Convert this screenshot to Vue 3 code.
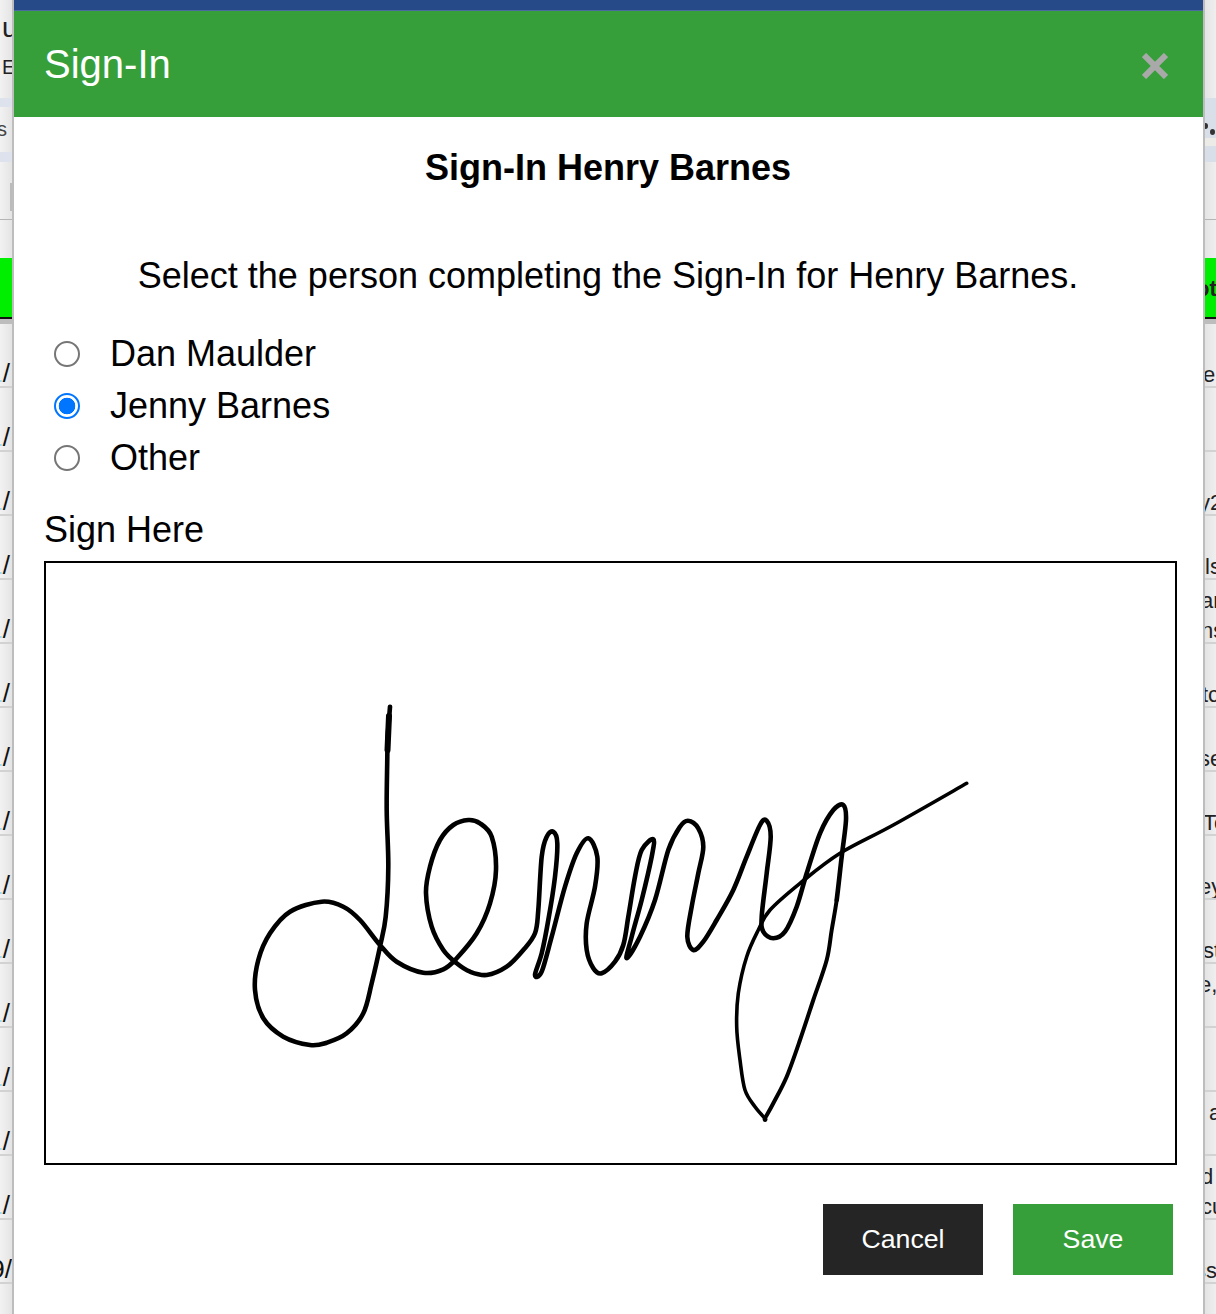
<script setup>
const fromCropA = ([x, y]) => [240 + x / 3, 690 + y / 3]
const fromCropB = ([x, y]) => [600 + x / 3, 760 + y / 3]

const stem = [[450,50],[446,100],[443,140],[442,200],[440,360],[445,530],[437,680],[420,770],[395,880],[370,970],[320,1030],[260,1058],[210,1065],[130,1040],[70,985],[45,900],[55,810],[90,730],[150,665],[245,635],[310,650],[360,690],[420,765],[470,815],[550,848],[610,838],[650,805],[710,730],[750,640],[768,540],[755,440],[720,400],[685,390],[640,405],[600,450],[570,530],[558,610],[575,710],[610,780],[650,820],[690,845],[740,855],[800,830],[850,780],[885,730],[895,660],[905,500],[920,440],[940,425],[952,460],[945,560],[925,690],[905,790],[885,855],[905,845],[935,740],[975,590],[1010,490],[1045,445],[1072,500],[1065,590],[1040,700],[1040,780],[1060,835],[1085,850]].map(fromCropA)
const rest = [[45,605],[70,555],[85,470],[105,350],[125,270],[160,238],[155,290],[125,420],[95,530],[80,595],[120,530],[165,420],[205,270],[240,200],[265,182],[295,205],[310,260],[295,340],[275,440],[262,530],[280,570],[310,545],[350,480],[400,390],[440,290],[480,195],[500,182],[512,230],[500,340],[485,470],[490,515],[520,535],[555,515],[590,440],[620,340],[660,220],[700,150],[730,135],[738,180],[725,290]].map(fromCropB)
const fade = [[710,420],[695,510],[680,600],[640,720],[600,840],[560,950],[520,1030],[495,1075]].map(fromCropB)
const tail = [[495,1075],[465,1040],[435,990],[420,900],[410,800],[415,700],[440,590],[475,510],[510,450],[600,370],[720,280],[880,195],[1100,70]].map(fromCropB)

const all = [...stem, ...rest, ...fade, ...tail]
const fadeStart = stem.length + rest.length
const tailStart = fadeStart + fade.length

function smooth(points, from, to) {
  let d = `M${points[from][0].toFixed(1)} ${points[from][1].toFixed(1)}`
  for (let i = from; i < to; i++) {
    const p0 = points[i - 1] || points[i]
    const p1 = points[i]
    const p2 = points[i + 1]
    const p3 = points[i + 2] || p2
    const c1x = p1[0] + (p2[0] - p0[0]) / 6
    const c1y = p1[1] + (p2[1] - p0[1]) / 6
    const c2x = p2[0] - (p3[0] - p1[0]) / 6
    const c2y = p2[1] - (p3[1] - p1[1]) / 6
    d += `C${c1x.toFixed(1)} ${c1y.toFixed(1)} ${c2x.toFixed(1)} ${c2y.toFixed(1)} ${p2[0].toFixed(1)} ${p2[1].toFixed(1)}`
  }
  return d
}
const mainPath = smooth(all, 0, fadeStart)
const fadePath = smooth(all, fadeStart, tailStart)
const tailPath = smooth(all, tailStart, all.length - 1)

const people = ['Dan Maulder', 'Jenny Barnes', 'Other']
const leftRows = Array.from({ length: 14 }, () => ({ digit: '1', faint: true, pad: 2 }))
  .concat({ digit: '9', faint: false, pad: 0 })
const rightRows = [
  { a: '', b: 'e', x: -2 },
  { a: '', b: '', x: 0 },
  { a: '', b: 'y2', x: -6 },
  { a: '', b: 'ls', x: 0 },
  { a: 'ar', b: 'ns', x: -4 },
  { a: '', b: 'tc', x: -3 },
  { a: '', b: 'se', x: -6 },
  { a: '', b: 'Te', x: -2 },
  { a: '', b: 'ey', x: -6 },
  { a: '', b: 'st', x: -2 },
  { a: 'e,', b: '', x: -6 },
  { a: '', b: '', x: 0 },
  { a: 'a', b: '', x: 4 },
  { a: 'd', b: 'cu', x: -4 },
  { a: '', b: 'ss', x: -10 }
]
</script>

<template>
  <div class="page">
    <aside class="strip strip-left">
      <div class="top">
        <div class="t-u">u</div>
        <div class="t-e">E</div>
        <div class="band band-a"></div>
        <div class="t-s">s</div>
        <div class="band band-b"></div>
        <div class="tool"><span class="tool-mark"></span></div>
        <div class="green"></div>
        <div class="green-shadow"></div>
      </div>
      <div
        v-for="(r, i) in leftRows"
        :key="i"
        class="row row-left"
        :style="{ paddingRight: r.pad + 'px' }"
      ><span :class="{ faint: r.faint }">{{ r.digit }}</span><span>/</span></div>
    </aside>

    <main class="modal">
      <div class="topbar"></div>
      <header class="head">
        <h1>Sign-In</h1>
        <svg class="close" viewBox="0 0 26 26" aria-label="Close">
          <path d="M2 2L24 24M24 2L2 24" />
        </svg>
      </header>
      <section class="body">
        <h2>Sign-In Henry Barnes</h2>
        <p class="lead">Select the person completing the Sign-In for Henry Barnes.</p>
        <div class="options">
          <label v-for="(p, i) in people" :key="p" class="option">
            <span class="radio" :class="{ on: i === 1 }"></span>
            <span>{{ p }}</span>
          </label>
        </div>
        <div class="sign-label">Sign Here</div>
        <div class="pad">
          <svg viewBox="46 563 1129 600" class="sig">
            <path :d="mainPath" class="ink" />
            <path d="M389 716L387.5 750" class="ink heavy" />
            <path :d="fadePath" class="ink mid" />
            <path :d="tailPath" class="ink thin" />
          </svg>
        </div>
        <div class="actions">
          <button class="btn dark">Cancel</button>
          <button class="btn green-btn">Save</button>
        </div>
      </section>
    </main>

    <aside class="strip strip-right">
      <div class="top">
        <div class="rband"><span class="dots"><i></i><i></i></span></div>
        <div class="rline"></div>
        <div class="green"><span class="gt">ot</span></div>
        <div class="green-shadow"></div>
      </div>
      <div v-for="(r, i) in rightRows" :key="i" class="row row-right">
        <span class="line" :style="{ marginLeft: r.x + 'px' }">{{ r.a }}</span>
        <span class="line" :style="{ marginLeft: r.x + 'px' }">{{ r.b }}</span>
      </div>
    </aside>
  </div>
</template>

<style>
html, body { margin: 0; padding: 0; background: #fff; }
</style>

<style scoped>
.page {
  display: flex;
  width: 1216px;
  height: 1314px;
  overflow: hidden;
  font-family: "Liberation Sans", Arial, sans-serif;
  color: #000;
}
.strip {
  height: 1314px;
  overflow: hidden;
  font-size: 22px;
  color: #222;
  flex: none;
}
.strip-left { width: 14px; background: linear-gradient(90deg, #f2f2f2 0, #e4e4e4 12px, #bdbdbd 12px); }
.strip-right { width: 13px; background: linear-gradient(90deg, #bdbdbd 2px, #e4e4e4 2px, #efefef 100%); }
.top { height: 324px; display: flex; flex-direction: column; }
.strip-left .top { width: 12px; overflow: hidden; }
.strip-right .top { margin-left: 2px; overflow: hidden; }
.t-u { margin: 13px 0 0 2px; height: 30px; line-height: 30px; font-size: 28px; }
.t-e { margin: 9px 0 0 2px; height: 30px; line-height: 30px; font-size: 20px; }
.band { background: #dde2ec; height: 9px; }
.band-a { margin-top: 16px; }
.t-s { height: 45px; line-height: 45px; font-size: 20px; color: #444; margin-left: -3px; }
.band-b { height: 10px; flex: none; }
.tool { height: 57px; border-bottom: 1px solid #b5b5b5; position: relative; flex: none; }
.tool-mark { display: block; position: absolute; left: 10px; top: 21px; width: 4px; height: 28px; background: #bbb; }
.green { height: 59px; background: #00ee00; border-bottom: 2px solid #111; overflow: hidden; flex: none; }
.strip-left .green { margin-top: 38px; }
.green-shadow { height: 5px; background: #bdbdbd; flex: none; }
.rband {
  margin-top: 98px;
  height: 64px;
  background: linear-gradient(#d8dfe9 0 40px, #ecebe8 40px 48px, #d8dfe9 48px);
  position: relative;
  flex: none;
}
.rline { height: 57px; border-bottom: 1px solid #b5b5b5; margin-bottom: 38px; flex: none; }
.gt { display: block; font-size: 22px; font-weight: 700; line-height: 62px; margin-left: -9px; }
.dots i { position: absolute; background: #333; border-radius: 50%; width: 5px; height: 6px; left: 5px; top: 31px; }
.dots i + i { left: -2px; top: 25px; }
.row {
  box-sizing: border-box;
  height: 64px;
  border-bottom: 2px solid #d2d2d2;
  overflow: hidden;
  white-space: nowrap;
}
.row-left {
  width: 12px;
  display: flex;
  justify-content: flex-end;
  font-size: 26px;
  line-height: 30px;
  padding-top: 34px;
  color: #111;
}
.row-left span { flex: none; }
.faint { color: #a8d8ec; }
.row-right {
  margin-left: 2px;
  padding-top: 6px;
  display: flex;
  flex-direction: column;
  font-size: 22px;
}
.line { display: block; height: 30px; line-height: 30px; flex: none; }

.modal {
  flex: none;
  width: 1189px;
  height: 1314px;
  background: #fff;
}
.topbar { height: 10px; background: #264a87; border-bottom: 1px solid #4a6aa0; }
.head {
  height: 106px;
  background: #379f3a;
  display: flex;
  align-items: center;
  justify-content: space-between;
  padding: 0 35px 0 30px;
  color: #fff;
}
.head h1 { margin: 0; font-size: 40px; font-weight: 400; line-height: 1; }
.close { width: 26px; height: 26px; margin-top: 4px; }
.close path { stroke: #a9a9a9; stroke-width: 6; fill: none; }
.body { padding: 0 26px 0 30px; }
h2 { margin: 0; padding: 30px 5px 0 0; height: 42px; line-height: 42px; font-size: 36px; font-weight: 700; text-align: center; }
.lead { margin: 66px 0 0; padding-right: 5px; height: 42px; line-height: 42px; font-size: 36px; text-align: center; }
.options { margin-top: 31px; display: flex; flex-direction: column; }
.option { display: flex; align-items: center; height: 52px; font-size: 36px; gap: 30px; padding-left: 10px; }
.radio { box-sizing: border-box; width: 26px; height: 26px; border-radius: 50%; border: 2px solid #767676; background: #fff; flex: none; }
.radio.on { border-color: #0075ff; background: radial-gradient(circle, #0075ff 0 8px, #fff 8.6px); }
.sign-label { margin-top: 24px; font-size: 36px; line-height: 44px; height: 44px; }
.pad { box-sizing: border-box; margin-top: 9px; width: 1133px; height: 604px; border: 2px solid #000; }
.sig { display: block; width: 1129px; height: 600px; }
.ink { fill: none; stroke: #000; stroke-width: 4.6; stroke-linecap: round; stroke-linejoin: round; }
.heavy { stroke-width: 6; }
.mid { stroke-width: 4; }
.thin { stroke-width: 3.6; }
.actions { margin-top: 39px; width: 1129px; display: flex; justify-content: flex-end; gap: 30px; }
.btn { width: 160px; height: 71px; border: 0; color: #fff; font: 400 26.7px "Liberation Sans", Arial, sans-serif; padding: 0; }
.dark { background: #252525; }
.green-btn { background: #379f3a; }
</style>
